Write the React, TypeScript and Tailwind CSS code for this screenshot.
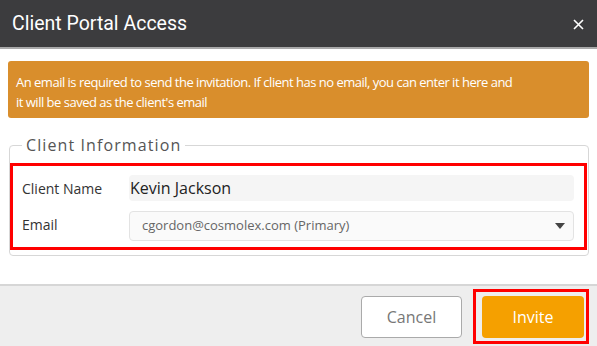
import React from "react";

export default function App() {
  return (
    <div className="relative w-[597px] h-[346px] bg-white overflow-hidden" style={{ fontFamily: '"Open Sans", "Noto Sans", sans-serif' }}>
      <div className="h-[47px] bg-[#3c3c3e] flex items-center justify-between pl-[12px] pr-[13px]">
        <div className="text-white text-[19.5px] font-['Roboto',sans-serif] mt-[1px]">Client Portal Access</div>
        <svg width="11" height="11" viewBox="0 0 11 11" className="mt-[1px]">
          <path d="M1 1L10 10M10 1L1 10" stroke="#fff" strokeWidth="1.6" />
        </svg>
      </div>
      <div className="h-[2px] bg-[#a9a9a9]" />
      <div className="px-[8px] pt-[12px]">
        <div className="bg-[#d98e2c] rounded-[3px] text-white text-[13px] leading-[20px] px-[8px] pt-[11px] pb-[6px] tracking-[-0.5px]">
          An email is required to send the invitation. If client has no email, you can enter it here and
          <br />
          it will be saved as the client's email
        </div>
      </div>
      <fieldset className="ml-[9px] mr-[8px] mt-[19px] border border-[#d7d7d7] rounded-[4px] px-[12px] pt-[0px] pb-[14px]">
        <legend className="px-[4px] text-[16px] text-[#555] tracking-[1.1px] leading-[16px]">Client Information</legend>
        <div className="flex items-center mt-[22px]">
          <div className="w-[107px] text-[14px] text-[#333] pt-[1px]">Client Name</div>
          <div className="h-[26px] w-[445px] bg-[#f5f5f5] rounded-[4px] flex items-center pl-[1px] text-[16px] text-[#222]">Kevin Jackson</div>
        </div>
        <div className="flex items-center mt-[10px]">
          <div className="w-[107px] text-[14px] text-[#333] -mt-[4px]">Email</div>
          <div className="h-[30px] w-[445px] bg-[#fafafa] border border-[#e3e3e3] rounded-[4px] flex items-center justify-between pl-[12px] pr-[8px] text-[13px] text-[#666]">
            <span>cgordon@cosmolex.com (Primary)</span>
            <svg width="10" height="6" viewBox="0 0 10 6"><path d="M0 0H10L5 6Z" fill="#444" /></svg>
          </div>
        </div>
      </fieldset>
      <div className="absolute left-[10px] top-[163px] w-[577px] h-[87px] border-[3px] border-[#ff0000]" />
      <div className="absolute left-0 right-0 bottom-0 h-[62px] border-t-[2px] border-[#d6d6d6] bg-[#eeeeee] flex items-start justify-end pr-[13px] pt-[10px] gap-[20px]">
        <button className="w-[101px] h-[42px] bg-white border border-[#aaaaaa] rounded-[4px] text-[16px] text-[#777]">Cancel</button>
        <button className="w-[102px] h-[42px] bg-[#f5a000] rounded-[4px] text-[16px] text-white">Invite</button>
      </div>
      <div className="absolute left-[473px] top-[289px] w-[116px] h-[55px] border-[3px] border-[#ff0000]" />
    </div>
  );
}
